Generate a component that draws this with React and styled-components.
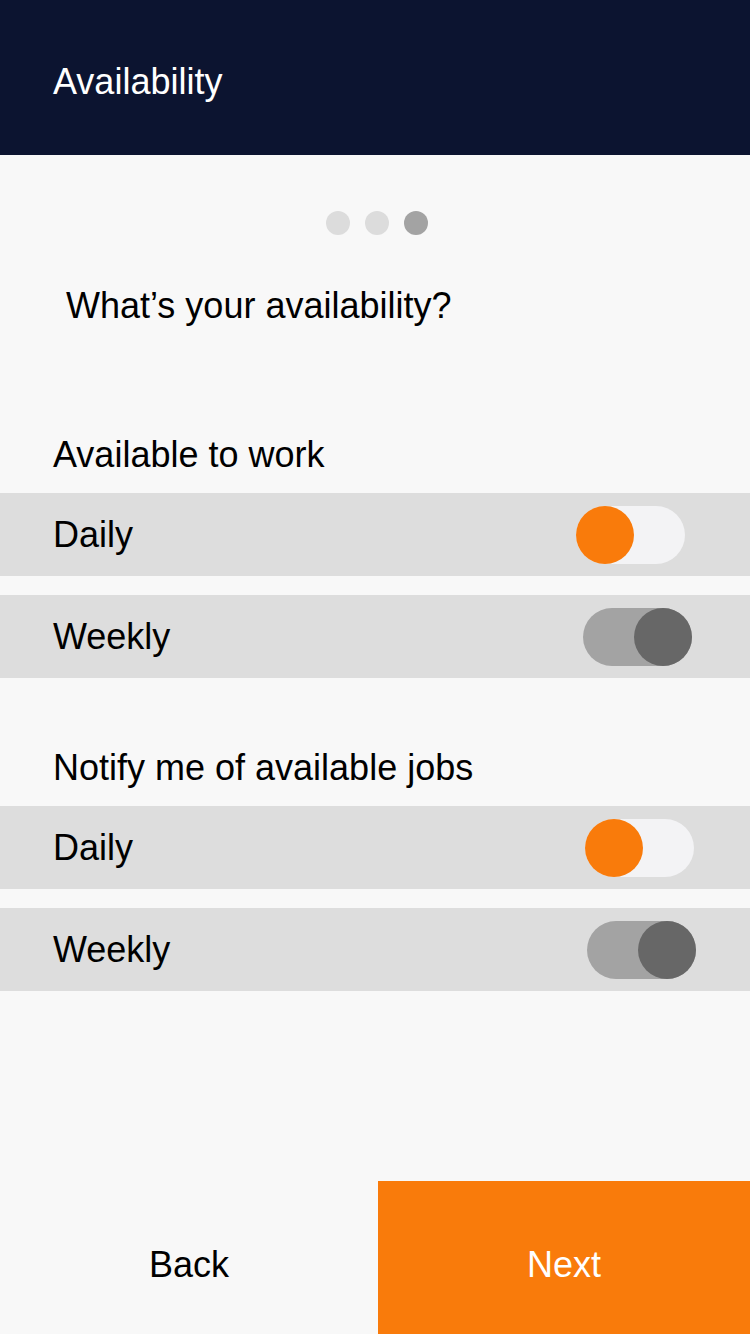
import React from "react";
import styled, { createGlobalStyle } from "styled-components";

const GlobalStyle = createGlobalStyle`
  html, body {
    margin: 0;
    padding: 0;
    background: #f8f8f8;
  }
  body {
    font-family: "Liberation Sans", Arial, sans-serif;
    color: #000;
  }
`;

const Screen = styled.div`
  display: flex;
  flex-direction: column;
  width: 750px;
  min-height: 1334px;
  background: #f8f8f8;
`;

const Header = styled.header`
  height: 155px;
  box-sizing: border-box;
  padding: 64px 0 0 53px;
  background: #0c1430;
`;

const HeaderTitle = styled.h1`
  margin: 0;
  font-size: 36px;
  line-height: 36px;
  font-weight: 400;
  color: #ffffff;
`;

const Pager = styled.div`
  display: flex;
  justify-content: center;
  gap: 15px;
  padding: 56px 0 0 4px;
`;

const Dot = styled.span`
  width: 24px;
  height: 24px;
  border-radius: 50%;
  background: ${(p) => (p.active ? "#a3a3a3" : "#dcdcdc")};
`;

const Question = styled.h2`
  margin: 53px 0 0 66px;
  font-size: 36px;
  line-height: 36px;
  font-weight: 400;
`;

const Section = styled.section`
  display: flex;
  flex-direction: column;
  gap: 19px;
  margin-top: ${(p) => p.top}px;
`;

const SectionLabel = styled.h3`
  margin: 0 0 1px 53px;
  font-size: 36px;
  line-height: 36px;
  font-weight: 400;
`;

const Row = styled.div`
  display: flex;
  align-items: center;
  justify-content: space-between;
  height: 83px;
  padding: 0 ${(p) => p.inset}px 0 53px;
  background: #dddddd;
  font-size: 36px;
`;

const Track = styled.div`
  display: flex;
  justify-content: ${(p) => (p.on ? "flex-start" : "flex-end")};
  width: 109px;
  height: 58px;
  border-radius: 29px;
  background: ${(p) => (p.on ? "#f3f3f5" : "#a3a3a3")};
`;

const Knob = styled.span`
  width: 58px;
  height: 58px;
  border-radius: 50%;
  background: ${(p) => (p.on ? "#f97b0b" : "#676767")};
`;

const Footer = styled.footer`
  display: grid;
  grid-template-columns: 378px 1fr;
  height: 153px;
  margin-top: auto;
`;

const FooterButton = styled.button`
  border: 0;
  margin: 0;
  padding: 14px 0 0;
  font-family: "Liberation Sans", Arial, sans-serif;
  font-size: 36px;
  background: ${(p) => (p.primary ? "#f97b0b" : "transparent")};
  color: ${(p) => (p.primary ? "#ffffff" : "#000000")};
  cursor: pointer;
`;

function Toggle({ on }) {
  return (
    <Track on={on ? 1 : 0}>
      <Knob on={on ? 1 : 0} />
    </Track>
  );
}

const sections = [
  {
    title: "Available to work",
    top: 113,
    rows: [
      { label: "Daily", on: true, inset: 65 },
      { label: "Weekly", on: false, inset: 58 },
    ],
  },
  {
    title: "Notify me of available jobs",
    top: 72,
    rows: [
      { label: "Daily", on: true, inset: 56 },
      { label: "Weekly", on: false, inset: 54 },
    ],
  },
];

export default function App() {
  return (
    <>
      <GlobalStyle />
      <Screen>
        <Header>
          <HeaderTitle>Availability</HeaderTitle>
        </Header>
        <Pager>
          <Dot />
          <Dot />
          <Dot active />
        </Pager>
        <Question>What’s your availability?</Question>
        {sections.map((s) => (
          <Section key={s.title} top={s.top}>
            <SectionLabel>{s.title}</SectionLabel>
            {s.rows.map((r) => (
              <Row key={r.label} inset={r.inset}>
                <span>{r.label}</span>
                <Toggle on={r.on} />
              </Row>
            ))}
          </Section>
        ))}
        <Footer>
          <FooterButton>Back</FooterButton>
          <FooterButton primary>Next</FooterButton>
        </Footer>
      </Screen>
    </>
  );
}
